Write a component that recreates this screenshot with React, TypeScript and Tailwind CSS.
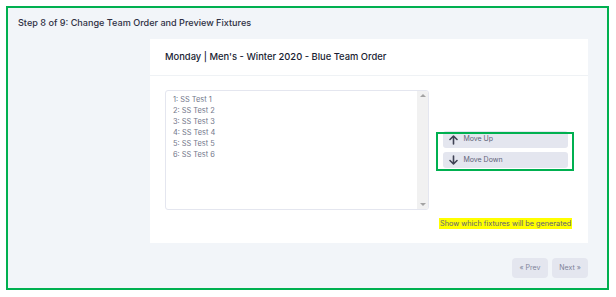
import React from "react";

const font = { fontFamily: "Inter, 'Noto Sans', sans-serif" };

function UpArrow() {
  return (
    <svg width="9" height="10" viewBox="0 0 9 10" fill="none" stroke="#3f4254" strokeWidth="1.6" strokeLinecap="round" strokeLinejoin="round">
      <path d="M4.5 9V1.2M1 4.5L4.5 1L8 4.5" />
    </svg>
  );
}
function DownArrow() {
  return (
    <svg width="9" height="10" viewBox="0 0 9 10" fill="none" stroke="#3f4254" strokeWidth="1.6" strokeLinecap="round" strokeLinejoin="round">
      <path d="M4.5 1v7.8M1 5.5L4.5 9L8 5.5" />
    </svg>
  );
}

export default function App() {
  const items = ["1: SS Test 1", "2: SS Test 2", "3: SS Test 3", "4: SS Test 4", "5: SS Test 5", "6: SS Test 6"];
  return (
    <div className="w-[616px] h-[297px] bg-white pl-[6px] pt-[6px]" style={font}>
      <div className="w-[603px] h-[284px] border-2 border-[#00b050] bg-[#f2f5f9] flex flex-col">
        <div className="pl-[10px] pt-[9px] h-[31px] text-[9.1px] leading-[12px] font-medium text-[#2f3044] whitespace-nowrap">
          Step 8 of 9: Change Team Order and Preview Fixtures
        </div>
        <div className="ml-[142px] w-[438px] bg-white flex flex-col">
          <div className="h-[37px] px-[15px] flex items-center text-[9.4px] font-medium text-[#181c32] border-b border-[#eff2f5] pt-[1px] whitespace-nowrap">
            Monday | Men's - Winter 2020 - Blue Team Order
          </div>
          <div className="px-[15px] pt-[14px] pb-[14px] flex flex-col">
            <div className="flex flex-row">
              <div className="w-[267px] h-[120px] border border-[#e4e6ef] rounded-[3px] flex flex-row overflow-hidden">
                <div className="flex-1 pl-[7px] pt-[3px] flex flex-col text-[7.4px] leading-[11px] text-[#72768a]">
                  {items.map((t) => (
                    <div key={t}>{t}</div>
                  ))}
                </div>
                <div className="w-[11px] bg-[#f1f1f1] flex flex-col items-center justify-between py-[3px]">
                  <div className="w-0 h-0 border-l-[3px] border-r-[3px] border-b-[3px] border-l-transparent border-r-transparent border-b-[#a3a3a3]" />
                  <div className="w-0 h-0 border-l-[3px] border-r-[3px] border-t-[3px] border-l-transparent border-r-transparent border-t-[#a3a3a3]" />
                </div>
              </div>
              <div className="relative ml-[7px] w-[138px] mt-[41px] h-[39px]">
                <div className="pl-[7px] pr-[5px] flex flex-col gap-[4px]">
                  <div className="h-[17px] rounded-[3px] bg-[#e4e6ef] flex items-center pl-[6px] gap-[5px] text-[7px] text-[#5e6278]">
                    <UpArrow />
                    <span>Move Up</span>
                  </div>
                  <div className="h-[16px] rounded-[3px] bg-[#e4e6ef] flex items-center pl-[6px] gap-[5px] text-[7px] text-[#5e6278]">
                    <DownArrow />
                    <span>Move Down</span>
                  </div>
                </div>
                <div className="absolute left-0 top-[1px] w-[138px] h-[39px] border-2 border-[#00b050]" />
              </div>
            </div>
            <div className="mt-[8px] pl-[274px] flex">
              <span className="bg-[#ffff00] text-[7.3px] leading-[11px] text-[#5e6278] px-[1px] whitespace-nowrap">
                Show which fixtures will be generated
              </span>
            </div>
          </div>
        </div>
        <div className="mt-[15px] ml-[504px] w-[76px] flex flex-row gap-[4px]">
          <div className="w-[36px] h-[20px] rounded-[4px] bg-[#e4e6ef] flex items-center justify-center text-[7px] text-[#7e8299]">
            « Prev
          </div>
          <div className="w-[36px] h-[20px] rounded-[4px] bg-[#e4e6ef] flex items-center justify-center text-[7px] text-[#7e8299]">
            Next »
          </div>
        </div>
      </div>
    </div>
  );
}
